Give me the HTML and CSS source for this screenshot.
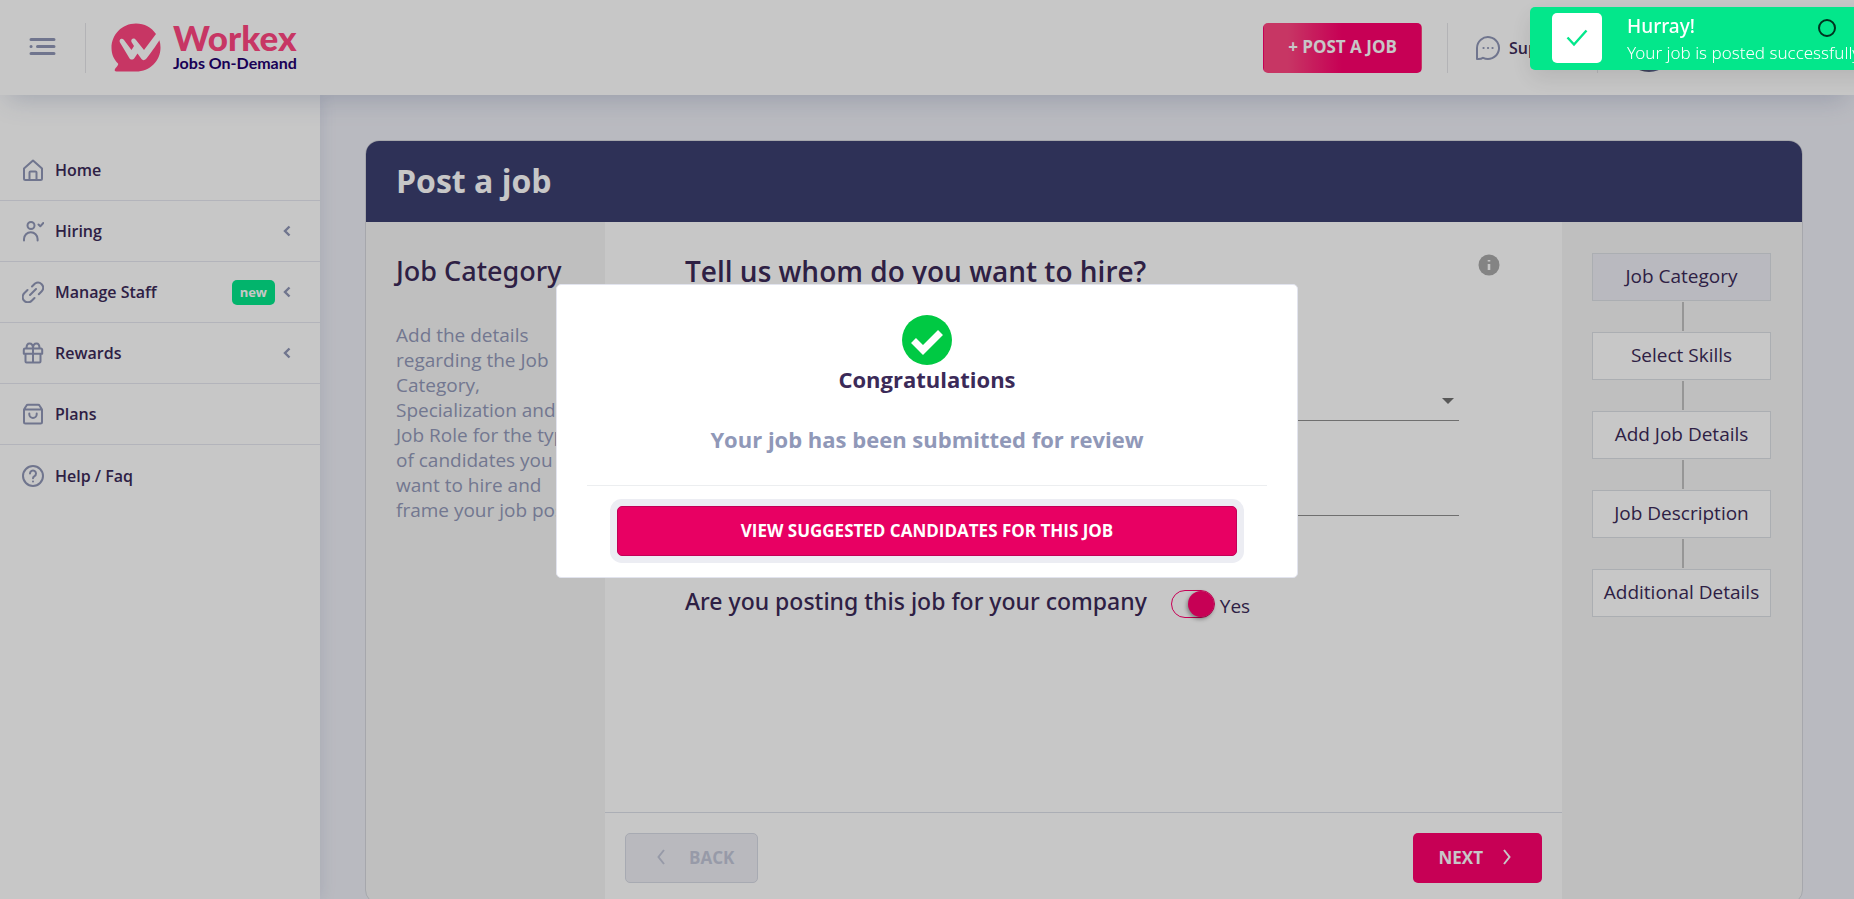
FILE: index.html
```html
<!DOCTYPE html>
<html lang="en">
<head>
<meta charset="utf-8">
<title>Workex - Post a job</title>
<link rel="stylesheet" href="styles.css">
</head>
<body>
<header class="topbar">
  <button class="burger" type="button" aria-label="Toggle menu">
    <svg width="28" height="20" viewBox="0 0 28 20" fill="none" stroke="currentColor" stroke-width="3" stroke-linecap="round"><path d="M2 2.500H25M8.500 9.500H25M2 9.500H2.100M2 16.500H25"/></svg>
  </button>
  <span class="rule"></span>
  <a class="brand" href="#">
    <svg width="50" height="50" viewBox="0 0 50 50"><path fill="#ff4681" d="M25 .5C11 .5.500 11.500.500 25c0 6.500 2.500 11.500 6.500 15.500.8 1-1 3-3 5.500-.8 1.300-.2 2.500 1.500 2.500H25c14 0 24.500-10.500 24.500-24 0-2.500-.4-5-1.100-7.200C45.500 22 38.500 32 35 36c-1.500 1.500-3.500 1.500-4.500 0L26.500 30.500l-3 4.500c-1.500 2-4 2-5.200 0L9 19.500c-1.500-3 2-5 4-2.500l7.500 10 2.500-4-2.500-4c-1.200-3 2.300-5 4.300-2.300L33 27 45 11C40.500 4.500 33.500.5 25 .5z"/></svg>
    <span class="brand-text"><span class="brand-name">Workex</span><span class="brand-tag">Jobs On-Demand</span></span>
  </a>
  <button class="btn btn-post" type="button">+ POST A JOB</button>
  <span class="rule"></span>
  <a class="support" href="#">
    <svg width="26" height="26" viewBox="0 0 26 26" fill="none" stroke="#9097b6" stroke-width="2" stroke-linecap="round" stroke-linejoin="round"><path d="M2 24V13A11 11 0 1 1 8 22.800C6.500 24 4 24.200 2 24z"/><path d="M8.500 13h.1M13 13h.1M17.500 13h.1" stroke-width="2.200"/></svg>
    Support
  </a>
  <span class="rule"></span>
  <span class="avatar"></span>
</header>

<div class="shell">
  <nav class="sidebar">
    <a class="nav-item" href="#"><svg class="nav-icon" viewBox="0 0 22 22"><path d="M2 9.500 11 1.500l9 8V19.500a1.500 1.500 0 0 1-1.500 1.500h-15A1.500 1.500 0 0 1 2 19.500zM7.500 21v-7.500a1 1 0 0 1 1-1h5a1 1 0 0 1 1 1V21"/></svg>Home</a>
    <a class="nav-item" href="#"><svg class="nav-icon" viewBox="0 0 22 22"><circle cx="9" cy="5.500" r="3.500"/><path d="M2 20.500v-1.500a6.800 6.800 0 0 1 13.600 0v1.500M16.500 4.500l1.800 1.800L21.300 3"/></svg>Hiring<svg class="chev" viewBox="0 0 8 12"><path d="M6.500 1.500 2 6l4.500 4.500"/></svg></a>
    <a class="nav-item" href="#"><svg class="nav-icon" viewBox="0 0 22 22"><path d="M10 5.500l3-3a5.200 5.200 0 0 1 7 7.500l-3.200 3.200M12.500 17l-2.800 2.800a5.200 5.200 0 0 1-7.500-7.500L5.500 9M8 14l6-6"/></svg>Manage Staff<span class="tag">new</span><svg class="chev" viewBox="0 0 8 12"><path d="M6.500 1.500 2 6l4.500 4.500"/></svg></a>
    <a class="nav-item" href="#"><svg class="nav-icon" viewBox="0 0 22 22"><path d="M3 6.500h16a1.200 1.200 0 0 1 1.200 1.200v4.100H1.800V7.700A1.200 1.200 0 0 1 3 6.500zM3.500 12v7.500a1 1 0 0 0 1 1h13a1 1 0 0 0 1-1V12M11 6.500v14M11 6.500C11 3 9.500 1.600 7.500 1.600S4.500 3.500 4.500 6.500M11 6.500c0-3.500 1.500-4.900 3.500-4.900s3 1.900 3 4.900"/></svg>Rewards<svg class="chev" viewBox="0 0 8 12"><path d="M6.500 1.500 2 6l4.500 4.500"/></svg></a>
    <a class="nav-item" href="#"><svg class="nav-icon" viewBox="0 0 22 22"><path d="M2 6.500h18V19a1.500 1.500 0 0 1-1.500 1.500h-15A1.500 1.500 0 0 1 2 19zM2 6.500l2.500-4a1.500 1.500 0 0 1 1.300-.8h10.400a1.500 1.500 0 0 1 1.300.8l2.500 4M7.300 10.500v.8a3.700 3.700 0 0 0 7.400 0v-.8"/></svg>Plans</a>
    <a class="nav-item" href="#"><svg class="nav-icon" viewBox="0 0 22 22"><circle cx="11" cy="11" r="10"/><path d="M8 8.500a3 3 0 1 1 4.500 2.600c-1 .6-1.500 1-1.500 2.200M11 16.400v.2"/></svg>Help / Faq</a>
  </nav>

  <main class="main">
    <section class="card">
      <h1 class="card-head">Post a job</h1>
      <div class="cols">
        <aside class="side">
          <h2 class="side-title">Job Category</h2>
          <p class="side-text">Add the details regarding the Job Category, Specialization and Job Role for the type of candidates you want to hire and frame your job post.</p>
        </aside>
        <form class="form">
          <div class="form-body">
            <div class="form-head">
              <h2 class="form-title">Tell us whom do you want to hire?</h2>
              <svg class="info" viewBox="0 0 22 22"><circle cx="11" cy="11" r="10.500" fill="#a9a9a9"/><path d="M11 6v1.600M11 10v6" stroke="#fff" stroke-width="2.600"/></svg>
            </div>
            <div class="field field-select">
              <select class="input" aria-label="Job category"><option></option></select>
              <svg class="caret" viewBox="0 0 12 6"><path d="M0 0h12L6 6z" fill="#717171"/></svg>
            </div>
            <div class="field"><input class="input" type="text" aria-label="Job role"></div>
            <div class="company">
              <label class="question" for="company">Are you posting this job for your company</label>
              <input class="switch" id="company" type="checkbox" checked>
              <span class="yes">Yes</span>
            </div>
          </div>
          <div class="form-foot">
            <button class="btn btn-back" type="button" disabled><svg class="arrow" viewBox="0 0 8 16"><path d="M7 1 1.500 8 7 15"/></svg>BACK</button>
            <button class="btn btn-next" type="button">NEXT<svg class="arrow" viewBox="0 0 8 16"><path d="M1 1l5.500 7L1 15"/></svg></button>
          </div>
        </form>
        <ol class="steps">
          <li class="step step-on">Job Category</li>
          <li class="step">Select Skills</li>
          <li class="step">Add Job Details</li>
          <li class="step">Job Description</li>
          <li class="step">Additional Details</li>
        </ol>
      </div>
    </section>
  </main>
</div>

<div class="overlay"></div>

<div class="modal" role="dialog" aria-labelledby="modal-title">
  <svg class="modal-icon" viewBox="0 0 50 50"><circle cx="25" cy="25" r="25" fill="#00c943"/><path d="M11.500 25.500 21 35 38.500 17.500" fill="none" stroke="#fff" stroke-width="7" stroke-linejoin="miter"/></svg>
  <h2 class="modal-title" id="modal-title">Congratulations</h2>
  <p class="modal-text">Your job has been submitted for review</p>
  <div class="modal-foot"><button class="btn btn-view" type="button">VIEW SUGGESTED CANDIDATES FOR THIS JOB</button></div>
</div>

<div class="toast" role="status">
  <span class="toast-box"><svg width="22" height="18" viewBox="0 0 22 18" fill="none" stroke="#03e78b" stroke-width="2.400"><path d="M1.500 8.500 8 15.500 20.500 1.500"/></svg></span>
  <div class="toast-copy"><strong class="toast-title">Hurray!</strong><span class="toast-sub">Your job is posted successfully</span></div>
  <button class="toast-close" type="button" aria-label="Close"></button>
</div>
</body>
</html>
```
FILE: styles.css
```css
* { box-sizing: border-box; }

body {
  margin: 0;
  height: 100vh;
  overflow: hidden;
  background: #eeeff6;
  color: #3b2a58;
  font-family: "Open Sans", "Noto Sans", sans-serif;
  font-size: 19px;
}

h1, h2, p, ol { margin: 0; padding: 0; }
a { color: inherit; text-decoration: none; }
button, input, select { font: inherit; }

.btn {
  height: 50px;
  padding-bottom: 3px;
  border: 1px solid transparent;
  border-radius: 5px;
  font-size: 17px;
  font-weight: 700;
  color: #fff;
}

/* Top bar */
.topbar {
  position: relative;
  z-index: 2;
  display: flex;
  align-items: center;
  height: 95px;
  padding: 0 181px 0 29px;
  background: #fff;
  box-shadow: 0 12px 24px -8px rgba(70, 90, 140, .25);
}
.burger {
  display: flex;
  margin-bottom: 2px;
  padding: 0;
  border: 0;
  background: none;
  color: #9097b6;
}
.rule { width: 1px; height: 50px; background: #e6e6ea; }
.burger + .rule { margin: 0 25px 0 28px; }
.brand { display: flex; align-items: center; gap: 12px; margin-right: auto; }
.brand-text { display: flex; flex-direction: column; }
.brand-name {
  font: 900 35px/31px Lato, sans-serif;
  color: #ff4681;
}
.brand-tag {
  font: 700 16px/20px Lato, sans-serif;
  color: #22006e;
}
.btn-post {
  width: 159px;
  margin-right: 25px;
  background: linear-gradient(90deg, #ff4681, #ff4681 15%, #ff006d 50%);
}
.support {
  display: flex;
  align-items: center;
  gap: 8px;
  width: 149px;
  padding-left: 27px;
  font-size: 16px;
  font-weight: 600;
}
.avatar {
  width: 48px;
  height: 48px;
  margin-left: 27px;
  border-radius: 50%;
  background: linear-gradient(90deg, #3d3d46, #6a75b5);
}

/* Sidebar */
.shell { display: flex; height: calc(100vh - 95px); }
.sidebar {
  flex: 0 0 320px;
  padding-top: 45px;
  background: #fff;
  box-shadow: 0 0 16px rgba(60, 80, 140, .14);
}
.nav-item {
  display: flex;
  align-items: center;
  height: 61px;
  padding: 0 29px 0 22px;
  border-bottom: 1px solid #e6e7f0;
  font-size: 16px;
  font-weight: 600;
}
.nav-item:last-child { border-bottom: 0; }
.nav-icon {
  width: 22px;
  height: 22px;
  margin-right: 11px;
  fill: none;
  stroke: #9097b6;
  stroke-width: 2;
  stroke-linecap: round;
  stroke-linejoin: round;
}
.chev {
  width: 8px;
  height: 12px;
  margin-left: auto;
  fill: none;
  stroke: #9097b6;
  stroke-width: 2.4;
}
.tag {
  margin-left: auto;
  padding: 0 8px;
  border-radius: 5px;
  background: #03e78b;
  color: #fff;
  font-size: 13px;
  font-weight: 700;
  line-height: 25px;
}
.tag + .chev { margin-left: 8px; }

/* Post a job card */
.main { flex: 1; padding: 45px 51px 45px 45px; }
.card {
  overflow: hidden;
  border: 1px solid #d5d7dd;
  border-radius: 14px;
  background: #f5f5f5;
}
.card-head {
  padding: 0 30px 2px;
  background: #3c3f70;
  color: #fff;
  font-size: 32px;
  font-weight: 700;
  line-height: 79px;
}
.cols { display: grid; grid-template-columns: 239px 1fr 240px; }
.side { padding: 30px 20px 30px 30px; }
.side-title {
  font-family: "Noto Sans", sans-serif;
  font-size: 27px;
  font-weight: 500;
  line-height: 38px;
  white-space: nowrap;
}
.side-text { margin-top: 33px; color: #9399b9; line-height: 25px; }

.form { background: #fff; }
.form-body { height: 590px; padding: 30px 62px 0 80px; }
.form-head { display: flex; justify-content: space-between; }
.form-title { font-size: 28px; font-weight: 600; line-height: 38px; }
.info { width: 22px; height: 22px; margin-top: 2px; }
.field { position: relative; margin-right: 41px; padding-top: 55px; }
.field-select { padding-top: 91px; }
.input {
  display: block;
  width: 100%;
  height: 40px;
  padding: 0;
  border: 0;
  border-bottom: 1px solid #8f8f8f;
  border-radius: 0;
  outline: 0;
  background: none;
  appearance: none;
}
.caret { position: absolute; right: 5px; bottom: 17px; width: 12px; height: 6px; }
.company { display: flex; align-items: center; margin-top: 70px; }
.question {
  padding-bottom: 3px;
  font-family: "Noto Sans", sans-serif;
  font-size: 23px;
  font-weight: 500;
  line-height: 30px;
}
.switch {
  display: flex;
  justify-content: flex-end;
  width: 44px;
  height: 28px;
  margin: 2px 5px 0 24px;
  border: 1px solid #ff006d;
  border-radius: 14px;
  appearance: none;
}
.switch::before {
  content: "";
  width: 26px;
  height: 26px;
  border-radius: 50%;
  background: #ff006d;
  box-shadow: -1px 2px 4px rgba(0, 0, 0, .4);
}
.yes { margin-top: 6px; line-height: 24px; }

.form-foot {
  display: flex;
  justify-content: space-between;
  padding: 20px;
  border-top: 1px solid #dcdfe8;
}
.arrow { width: 8px; height: 16px; fill: none; stroke: currentColor; stroke-width: 2; }
.btn-back, .btn-next { display: flex; align-items: center; }
.btn-back {
  gap: 24px;
  padding: 0 23px 2px 31px;
  border-color: #d7dae4;
  background: #edeef4;
  color: #c2c6d8;
}
.btn-next { gap: 20px; padding: 0 30px 2px 24px; background: #ff006d; }

.steps { padding: 31px 31px 30px 30px; list-style: none; }
.step {
  position: relative;
  height: 48px;
  margin-bottom: 31px;
  border: 1px solid #dcdfe4;
  background: #fff;
  line-height: 44px;
  text-align: center;
  white-space: nowrap;
}
.step-on { background: #edeef5; }
.step + .step::before {
  content: "";
  position: absolute;
  left: 50%;
  bottom: 48px;
  width: 2px;
  height: 29px;
  background: #c0c0c0;
}

/* Layers over the page */
.overlay { position: fixed; inset: 0; z-index: 5; background: rgba(0, 0, 0, .22); }
.modal {
  position: fixed;
  top: 284px;
  left: 50%;
  z-index: 6;
  width: 742px;
  transform: translateX(-50%);
  padding: 30px;
  padding-bottom: 21px;
  border: 1px solid #e2e4ee;
  border-radius: 5px;
  background: #fff;
  text-align: center;
}
.modal-icon { display: block; width: 50px; height: 50px; margin: 0 auto; }
.modal-title { font-size: 22px; font-weight: 700; line-height: 28px; }
.modal-text {
  margin-top: 32px;
  color: #9098b8;
  font-size: 22px;
  font-weight: 700;
  line-height: 28px;
}
.modal-foot { margin-top: 32px; padding: 20px 30px 0; border-top: 1px solid #eceef0; }
.btn-view {
  display: block;
  width: 100%;
  border-color: #c20058;
  background: #e80063;
  box-shadow: 0 0 0 7px #ecedf3;
}

.toast {
  position: fixed;
  top: 7px;
  right: -30px;
  z-index: 7;
  display: flex;
  width: 354px;
  height: 63px;
  padding: 6px 22px;
  border-radius: 5px;
  background: #03e78b;
  box-shadow: 0 8px 24px rgba(0, 0, 0, .1);
  color: #fff;
  font-family: "Noto Sans", sans-serif;
}
.toast-box {
  display: flex;
  flex: 0 0 50px;
  align-items: center;
  justify-content: center;
  height: 50px;
  border-radius: 5px;
  background: #fff;
}
.toast-copy { display: flex; flex-direction: column; margin-left: 25px; white-space: nowrap; }
.toast-title { font-size: 19px; font-weight: 500; line-height: 26px; }
.toast-sub { font-size: 17px; font-weight: 300; line-height: 28px; }
.toast-close {
  position: absolute;
  top: 12px;
  right: 48px;
  width: 18px;
  height: 18px;
  padding: 0;
  border: 2px solid #00331f;
  border-radius: 50%;
  background: none;
}
```
